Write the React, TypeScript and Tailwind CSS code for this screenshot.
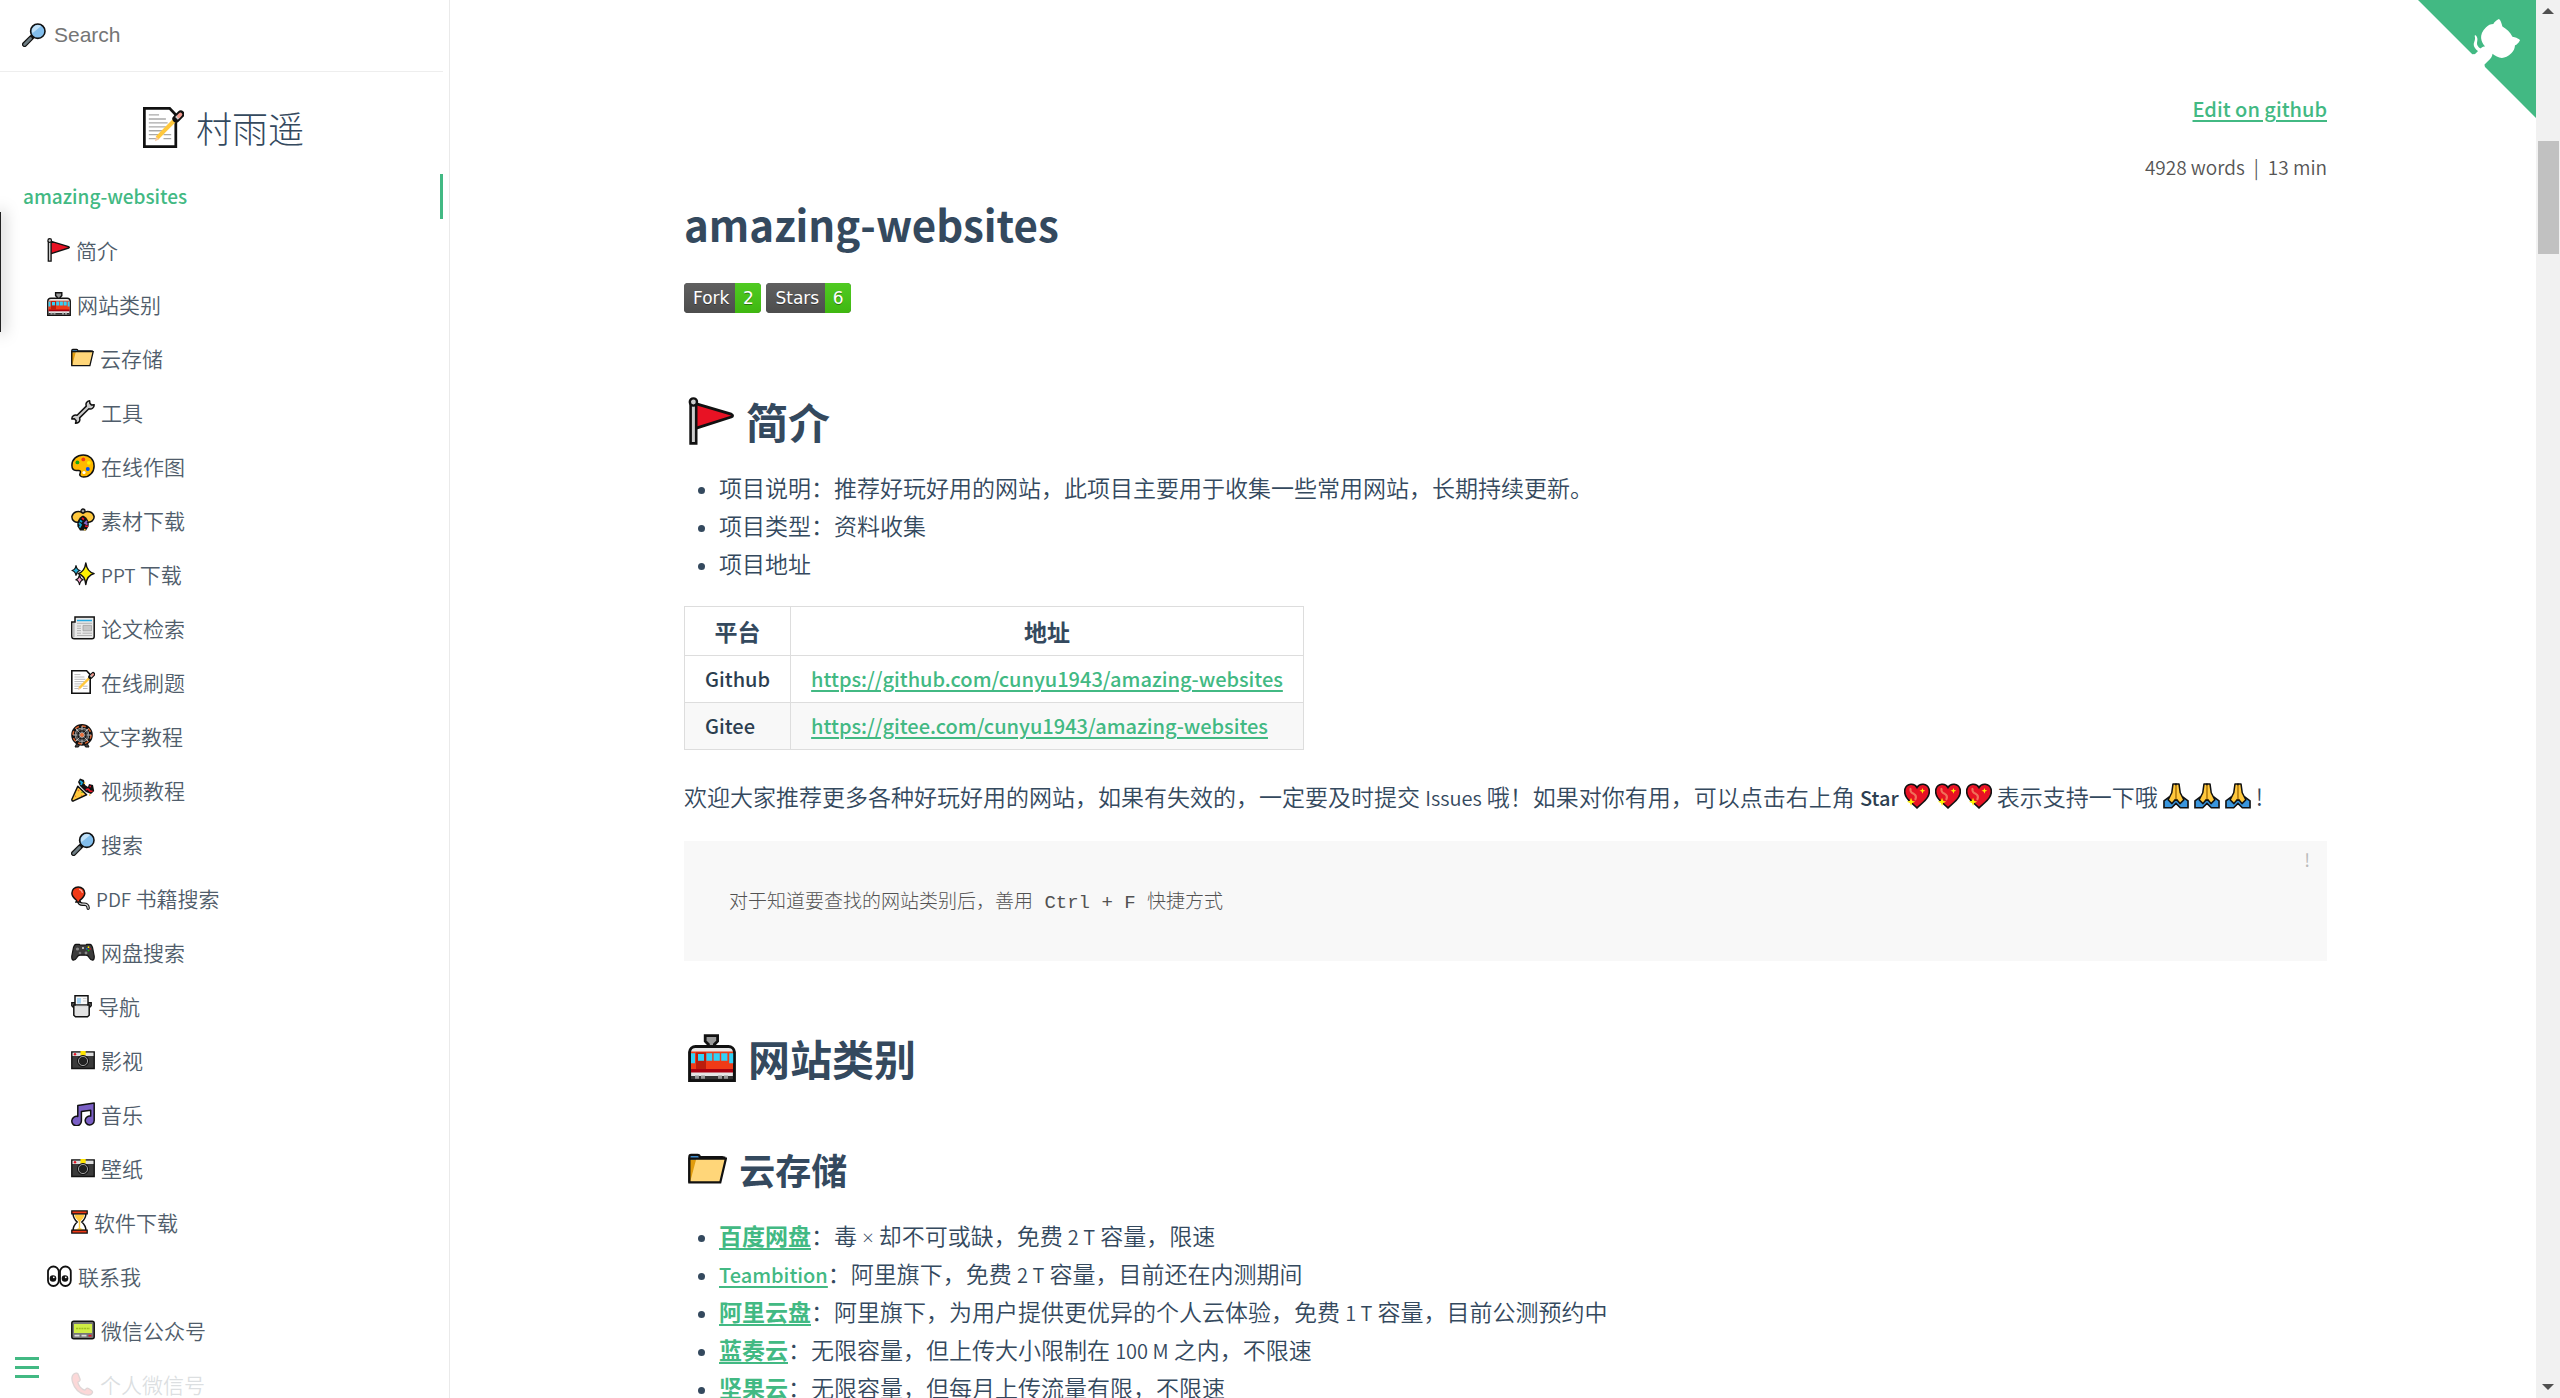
import type { ReactNode } from "react";

type IconName =
  | "search" | "memo" | "flag" | "tram" | "folder" | "wrench" | "palette" | "beetle" | "sparkles"
  | "newspaper" | "wheel" | "party" | "balloon" | "gamepad" | "printer" | "camera" | "music"
  | "hourglass" | "eyes" | "pager" | "phone" | "heart" | "pray";

/* Each drawing is 24 units high; the number is its width. */
const icons: Record<IconName, [number, ReactNode]> = {
  search: [24, <>
    <path d="M2.6 21.4 9.5 14.5" stroke="#111" strokeWidth="5.2" strokeLinecap="round" />
    <path d="M2.6 21.4 8.5 15.5" stroke="#6d7c82" strokeWidth="2.8" strokeLinecap="round" />
    <circle cx="15.8" cy="8.2" r="7.2" fill="#83beec" stroke="#111" strokeWidth="1.6" />
    <path d="M10.4 10.2a6 6 0 0 1 8.8-7.2z" fill="#c3e2f8" />
  </>],
  memo: [24, <>
    <path d="M.8.8h14.8l3.6 3.8v18.6H.8z" fill="#fff" stroke="#111" strokeWidth="1.6" />
    <path d="M3.4 4.6h6M3.4 7h10M3.4 9.3h11M3.4 11.6h10M3.4 13.9h8M3.4 16.2h6M3.4 18.5h5M12 16.2h4.5M12 18.5h4.5" stroke="#a9a9a9" strokeWidth=".8" />
    <path d="m8.3 18.1 13.1-13.3" stroke="#ffc83d" strokeWidth="2.4" />
    <path d="m7 20 .7-2.7 1.7 1.7z" fill="#f5c9a0" />
    <path d="m19.4 6.9 2.7-2.7" stroke="#111" strokeWidth="4.4" strokeLinecap="round" />
    <path d="m19.6 6.7 1.2-1.2" stroke="#ccc" strokeWidth="2.2" />
    <path d="m21 5.3.9-.9" stroke="#f09b90" strokeWidth="2.2" strokeLinecap="round" />
  </>],
  flag: [23, <>
    <path d="M3.4 3.2 21.6 8.6q1.4.8 0 1.4L3.4 15.8z" fill="#e81224" stroke="#111" strokeWidth="1.4" strokeLinejoin="round" />
    <path d="M1.3 3v20.2h2.8V3" fill="#ccc" stroke="#111" strokeWidth="1.3" />
    <circle cx="2.7" cy="2.5" r="1.8" fill="#ccc" stroke="#111" strokeWidth="1.2" />
  </>],
  tram: [24, <>
    <path d="M8.6.8h6.2v2.8l-1.6 1.6v1.4h-3V5.2L8.6 3.6z" fill="#999" stroke="#111" strokeWidth="1.4" />
    <path d="M.8 23.2V9a3 3 0 0 1 3-2.8h16.4a3 3 0 0 1 3 2.8v14.2z" fill="#e6e6e6" stroke="#111" strokeWidth="1.5" />
    <path d="M1.5 8.7h21v9.8h-21z" fill="#f03a17" />
    <path d="M1.5 17.5h21v1.8h-21z" fill="#a80010" />
    <path d="M1.5 9.6h2v5h-2zM9.2 9.6h2.9v3.8H9.2zM12.8 9.6h3.1v3.8h-3.1zM16.6 9.6h3.1v3.8h-3.1zM20.6 9.6h2v5h-2z" fill="#31d2f7" />
    <path d="M4 9.2h5v8.3H4z" fill="#bb1d0c" />
    <path d="M5 10h3v3.4H5z" fill="#31d2f7" />
    <path d="M1.5 21h21v1.6h-21z" fill="#333" />
    <path d="M3.5 21.6h5M15 21.6h5" stroke="#999" strokeWidth="1.6" strokeDasharray="2 1" />
  </>],
  folder: [23, <>
    <path d="M.8 19.6V4.6q0-1.1 1-1.1h3.8q1.2 0 1.3 1.3h13l2 .4" fill="#3f8ccc" stroke="#111" strokeWidth="1.3" />
    <path d="M.9 6.2h5.2l-3 13H.9z" fill="#e19c0d" />
    <path d="M4.8 5.9h17.3l-3.2 13.7H1.2z" fill="#ffd679" />
    <path d="M.8 5.6h21.4l-3.3 14H.8z" fill="none" stroke="#111" strokeWidth="1.3" />
  </>],
  wrench: [24, <>
    <path d="M18.6.8c-3 .3-4.2 2.700-3.300 5.300L6.100 15.300C3.400 14.500.9 15.900.8 19l2.600-.2 1.800 1.900-.7 2.500c3.300.2 5-2.300 4.100-5.300l9.300-9.200c2.800.9 5.300-.8 5.300-3.900l-2.600.300-1.700-1.700z" fill="#ccc" stroke="#111" strokeWidth="1.5" strokeLinejoin="round" />
  </>],
  palette: [24, <>
    <path d="M12.300.9C5.800.9.900 5.500.900 11.200c0 3.300 1.600 5.200 4.200 5.200h2.400c1.800 0 2.400 1 1.700 2.400-1.200 2.500.4 4.300 3.400 4.300 6 0 10.500-5 10.500-11.200S18.500.9 12.300.9z" fill="#ffb900" stroke="#111" strokeWidth="1.500" />
    <circle cx="12.300" cy="5.400" r="1.900" fill="#f03a17" /><circle cx="6.400" cy="8.400" r="1.900" fill="#16a516" />
    <circle cx="17.800" cy="8.800" r="1.900" fill="#fff100" /><circle cx="16.800" cy="14.900" r="2" fill="#0050ef" />
    <circle cx="13" cy="18.500" r="1.600" fill="#fff" />
  </>],
  beetle: [24, <>
    <path d="M12 5C8 2 2 3.500.900 8.500c-.3 4 3.600 6.500 6.600 5.500L12 9l4.500 5c3.500.8 6.900-2 6.600-5.500C22 3.500 16 2 12 5z" fill="#ffc83d" stroke="#111" strokeWidth="1.500" />
    <circle cx="12" cy="3" r="2" fill="#999" stroke="#111" strokeWidth="1.300" />
    <path d="M12 7.500c-4 2-6.500 6-5.500 11L9 22.500h6l2.500-4c1.200-5-1.500-9-5.500-11z" fill="#111" />
    <path d="m8 15 2 2-1.500 2.500M9 12.500l2 1.500" stroke="#0fa3d1" strokeWidth="1.800" />
    <path d="m16 13-2 2 2.500 1.500" stroke="#8764c8" strokeWidth="1.800" />
    <path d="m14 18 3 .5M11 10l2 1.500" stroke="#e81224" strokeWidth="1.700" />
    <path d="m13 21.500 1.500.5" stroke="#ffc83d" strokeWidth="1.600" />
  </>],
  sparkles: [24, <>
    <path d="M14.800 1q1.200 8.700 8.300 10.600-7 1.800-8.300 10.800-1-9-7.800-10.800Q13.700 9.700 14.800 1z" fill="#fff100" stroke="#111" strokeWidth="1.500" strokeLinejoin="round" />
    <path d="M5 3.500q.8 4.200 4 5-3.200.9-4 5-.7-4.100-4-5 3.400-.8 4-5z" fill="#26b3dd" stroke="#111" strokeWidth="1.200" strokeLinejoin="round" />
    <path d="M8.500 13.200q.8 3.800 3.700 4.600-2.900.9-3.700 4.900-.7-4-3.700-4.900 3-.8 3.700-4.600z" fill="#f7a4cd" stroke="#111" strokeWidth="1.200" strokeLinejoin="round" />
  </>],
  newspaper: [24, <>
    <path d="M4 6H.8v14.500q0 2.300 2.500 2.300H21q2.200 0 2.200-2.300V1H4z" fill="#e9e9e9" stroke="#111" strokeWidth="1.500" />
    <path d="M3.700 7v13q0 1.500-1 1.500-1.200 0-1.200-1.500V7z" fill="#bbb" />
    <path d="M6 4.500h15" stroke="#26a9e0" strokeWidth="1.500" />
    <path d="M6 7.300h15M6 10h4M6 12.300h4M6 14.600h4M6 17.200h4M11.500 17.200H21M6 19.500h15" stroke="#aaa" strokeWidth=".9" />
    <path d="M12 9.400h8.500v5.400H12z" fill="#c6c6c6" stroke="#999" strokeWidth=".7" />
  </>],
  wheel: [22, <>
    <path d="m8 15-4 8h3.500L11 15l3.500 8H18l-4-8" fill="#444" stroke="#111" strokeWidth="1" />
    <circle cx="11" cy="10.900" r="9" fill="#fff" stroke="#111" strokeWidth="3.600" />
    <circle cx="11" cy="10.900" r="9" fill="none" stroke="#d8612c" strokeWidth="1.500" strokeDasharray="4 3" />
    <circle cx="11" cy="10.900" r="7" fill="#555" />
    <path d="M11 2v18M2 11h18M4.600 4.600l12.800 12.800M17.400 4.600 4.600 17.400" stroke="#ddd" strokeWidth=".8" />
    <circle cx="11" cy="10.900" r="4" fill="none" stroke="#111" strokeWidth="1.300" />
    <circle cx="11" cy="10.900" r="1.900" fill="#f07038" />
  </>],
  party: [24, <>
    <path d="M9 8 7 4l2-3.500 4 1.500 1 5 3 2 1-3 4 1 1.200 6-3.200 3-5-2z" fill="#111" />
    <path d="m9 3 2 1.500-1 2.500" stroke="#18a5d6" strokeWidth="1.900" fill="none" />
    <path d="M15 12q2-2 3 0t3.500 1M18.500 8.500h1.500" stroke="#e81224" strokeWidth="1.700" fill="none" />
    <path d="m6.800 8.200 8.800 8.600L2.500 22.900Q.6 23.200.900 21.300z" fill="#ffc83d" stroke="#111" strokeWidth="1.500" strokeLinejoin="round" />
    <path d="m8 12-1 1M5 18l-1 .5M11 17l-.5.8" stroke="#e8622c" strokeWidth="1.300" /><path d="m10.500 14 1 .5" stroke="#16a516" strokeWidth="1.300" />
    <path d="M18 17h1.500M13.500 4.500V6" stroke="#ffc83d" strokeWidth="1.500" />
  </>],
  balloon: [19, <>
    <path d="M7.500 14.500q.5 4 5 3.700t4.700 4" fill="none" stroke="#111" strokeWidth="3.400" strokeLinecap="round" />
    <path d="M7.500 14.500q.5 4 5 3.700t4.700 4" fill="none" stroke="#ddd" strokeWidth="1.200" strokeLinecap="round" />
    <path d="M7.200 1C3.500 1 .9 3.800.9 7.200c0 3.300 2.300 5 4.700 7.200L5 16h4.400l-.6-1.600c2.500-2 5-4 5-7.200C13.800 3.800 11 1 7.200 1z" fill="#f03a17" stroke="#111" strokeWidth="1.500" />
    <path d="M8.500 3.300q2.500.7 2.800 3" fill="none" stroke="#ffab9c" strokeWidth="1.200" strokeLinecap="round" />
  </>],
  gamepad: [24, <>
    <path d="M5 4.300h3.300q.7.900 1.700.9h4q1 0 1.700-.9H19q1.700.2 2.500 3.200l1.700 8.500q.3 4-1.600 4.200-1.700 0-3.600-2.900Q16.800 15.200 15 15.200H9q-1.800 0-3 2.100-1.900 2.900-3.600 2.900Q.5 20 .8 16l1.700-8.500Q3.300 4.500 5 4.300z" fill="#3b3b3b" stroke="#111" strokeWidth="1.200" />
    <circle cx="6.500" cy="9" r="1.600" fill="#888" /><circle cx="15" cy="13" r="1.400" fill="#888" /><circle cx="9" cy="13" r="1.300" fill="#777" />
    <circle cx="12" cy="8" r="1" fill="#ddd" /><circle cx="17.500" cy="7.200" r=".9" fill="#fff100" /><circle cx="17.500" cy="10.400" r=".9" fill="#16c60c" />
    <circle cx="15.800" cy="8.900" r=".8" fill="#0078d7" /><circle cx="19.100" cy="8.900" r=".8" fill="#e81224" />
  </>],
  printer: [21, <>
    <path d="M.8 8.800h19.400v3l-1.500 1.500H2.300L.8 11.800z" fill="#888" stroke="#111" strokeWidth="1.400" />
    <path d="M4 1.800h13v11H4z" fill="#f8f8f8" stroke="#111" strokeWidth="1.500" />
    <path d="M6 4h4v5.500H6z" fill="#a6d3f2" /><path d="M12 4.500h3.500M12 7h3.500" stroke="#ccc" />
    <path d="M2.800 11h15.400v10.200l-1.700 1.500h-12l-1.700-1.500z" fill="#e3e3e3" stroke="#111" strokeWidth="1.500" />
    <path d="M5 11.500h11" stroke="#777" strokeWidth="1.200" />
  </>],
  camera: [24, <>
    <path d="M.8 4h22.400v16.500H.8z" fill="#3a3a3a" stroke="#111" strokeWidth="1.400" />
    <path d="M1.500 4.600h21V8h-21z" fill="#ddd" /><path d="M9.500 3h5.200v4.500H9.500z" fill="#ffe500" />
    <circle cx="4" cy="6.200" r="1.200" fill="#e81224" />
    <circle cx="12" cy="13" r="5.400" fill="#1b1b1b" stroke="#111" strokeWidth="1.300" /><circle cx="12" cy="13" r="4.600" fill="#222" stroke="#aaa" strokeWidth=".9" />
  </>],
  music: [24, <>
    <path d="M6.800 3.500 23.200 1v17.500a4.500 4.500 0 1 1-3.500-4.400V8.300l-9.300 1.300V19a4.800 4.800 0 1 1-3.600-4.600z" fill="#7a5fc5" stroke="#111" strokeWidth="1.500" strokeLinejoin="round" />
  </>],
  hourglass: [17, <>
    <path d="M2 3.500q.2 5 4.200 8.500Q2.200 15.500 2 20.500h13q-.2-5-4.200-8.500 4-3.500 4.200-8.500z" fill="#fff" stroke="#111" strokeWidth="1.500" />
    <path d="M3.300 4.500h10.400q-.7 4-4.500 6.900V18l4 2H3.800l4-2v-6.600Q4 8.500 3.300 4.500z" fill="#ffc83d" />
    <path d="M.8.900h15.400v3H.8zM.8 20.100h15.400v3H.8z" fill="#f03a17" stroke="#111" strokeWidth="1.300" />
  </>],
  eyes: [25, <>
    <rect x="1" y="2.500" width="10.800" height="19.500" rx="5.400" fill="#fff" stroke="#111" strokeWidth="1.800" />
    <rect x="13" y="2.500" width="10.800" height="19.500" rx="5.400" fill="#fff" stroke="#111" strokeWidth="1.800" />
    <circle cx="6" cy="14.500" r="3.300" fill="#111" /><circle cx="18" cy="14.500" r="3.300" fill="#111" />
    <circle cx="6.800" cy="13.300" r=".9" fill="#fff" /><circle cx="18.800" cy="13.300" r=".9" fill="#fff" />
  </>],
  pager: [24, <>
    <rect x=".8" y="3.300" width="22.400" height="17.400" rx="2" fill="#767676" stroke="#111" strokeWidth="1.500" />
    <path d="M3 6h18v9H3z" fill="#d0ee45" /><path d="M5 10.500h14" stroke="#9fbf20" strokeWidth="1.500" strokeDasharray="2 .7" />
    <path d="M3.500 17.700h5M10.500 17.700h5" stroke="#ddd" strokeWidth="1.700" /><path d="M17.500 17.700h3" stroke="#e81224" strokeWidth="1.700" />
  </>],
  phone: [23, <>
    <path d="M3.500 1.500C.9 3 .5 6.500 1.500 10c1.800 6 6.500 11 12.500 12.700 3.500.9 6.500.3 7.500-2.200.3-1-.3-1.500-1-2l-3-2c-1-.6-1.800-.3-2.500.4l-1.200 1.300c-3.300-1-6.600-4.700-7-8l1.500-1c.8-.6 1-1.300.7-2.300L7.500 3c-.5-1.800-2.500-2.400-4-1.500z" fill="#f03a3a" stroke="#5a3030" strokeWidth="1.300" />
  </>],
  heart: [24, <>
    <path d="M12 4.200C9.500-.3 2.700.3 1 5.300c-1.400 4.500 1.300 9 5.500 12.700L12 23l5.500-5c4.200-3.700 6.900-8.200 5.500-12.700C21.300.3 14.500-.3 12 4.200z" fill="#e81224" stroke="#111" strokeWidth="1.500" />
    <path d="M6 5.500q-.5 3 3 4.500 3 1.700 1.500 5" fill="none" stroke="#f0705a" strokeWidth="2" strokeLinecap="round" />
    <path d="m6.500 13.500 1 2.900 2.900 1-2.900 1-1 2.900-1-2.900-2.900-1 2.900-1zM17 4.500l.7 2 2 .7-2 .7-.7 2-.7-2-2-.7 2-.7z" fill="#fff100" />
  </>],
  pray: [24, <>
    <path d="M.9 16.500 5.500 13l6.500 3 6.500-3 4.600 3.500v6.300h-7.100l-4-4-4 4H.9z" fill="#3a96dd" stroke="#111" strokeWidth="1.500" />
    <path d="M9.200 1H12v13.500L8.300 19l-3.600-3.500L8.100 9z" fill="#ffc83d" stroke="#111" strokeWidth="1.400" strokeLinejoin="round" />
    <path d="M14.800 1H12v13.500l3.700 4.500 3.600-3.500L15.900 9z" fill="#ffc83d" stroke="#111" strokeWidth="1.400" strokeLinejoin="round" />
    <path d="M12 2v13" stroke="#d99a16" strokeWidth="1.600" />
  </>],
};

function Icon({ name, className = "h-6" }: { name: IconName; className?: string }) {
  const [width, drawing] = icons[name];
  return (
    <svg viewBox={`0 0 ${width} 24`} fill="none" aria-hidden="true" className={`w-auto shrink-0 ${className}`}>
      {drawing}
    </svg>
  );
}

type NavItem = { icon: IconName; label: string; latin?: string; children?: NavItem[] };

const nav: NavItem[] = [
  { icon: "flag", label: "简介" },
  {
    icon: "tram", label: "网站类别", children: [
      { icon: "folder", label: "云存储" },
      { icon: "wrench", label: "工具" },
      { icon: "palette", label: "在线作图" },
      { icon: "beetle", label: "素材下载" },
      { icon: "sparkles", latin: "PPT", label: "下载" },
      { icon: "newspaper", label: "论文检索" },
      { icon: "memo", label: "在线刷题" },
      { icon: "wheel", label: "文字教程" },
      { icon: "party", label: "视频教程" },
      { icon: "search", label: "搜索" },
      { icon: "balloon", latin: "PDF", label: "书籍搜索" },
      { icon: "gamepad", label: "网盘搜索" },
      { icon: "printer", label: "导航" },
      { icon: "camera", label: "影视" },
      { icon: "music", label: "音乐" },
      { icon: "camera", label: "壁纸" },
      { icon: "hourglass", label: "软件下载" },
    ],
  },
  {
    icon: "eyes", label: "联系我", children: [
      { icon: "pager", label: "微信公众号" },
      { icon: "phone", label: "个人微信号" },
    ],
  },
];

function NavList({ items }: { items: NavItem[] }) {
  return (
    <ul className="pl-6">
      {items.map((item) => (
        <li key={item.label + item.icon}>
          <a href="#" className="flex h-[54px] items-center gap-[6px] text-[21px] leading-6 font-[350] text-[#505d6b]">
            <Icon name={item.icon} />
            <span className="whitespace-nowrap">
              {item.latin && <span className="text-[19px] leading-none">{item.latin} </span>}
              {item.label}
            </span>
          </a>
          {item.children && <NavList items={item.children} />}
        </li>
      ))}
    </ul>
  );
}

function Sidebar() {
  return (
    <aside className="relative flex w-[450px] shrink-0 flex-col overflow-hidden border-r border-[#eaeaea] bg-white pr-[6px]">
      <label className="flex h-[72px] shrink-0 items-center gap-[8px] border-b border-[#eee] pb-[2px] pl-[22px]">
        <Icon name="search" />
        <input
          type="search"
          aria-label="Search"
          placeholder="Search"
          className="w-full bg-transparent font-['Liberation_Sans',sans-serif] text-[21px] outline-none placeholder:text-[#757575]"
        />
      </label>
      <h1 className="mt-[27px] flex h-14 shrink-0 items-center justify-center gap-[12px] pl-1 text-[36px] font-light">
        <Icon name="memo" className="h-[41px]" />
        <a href="#">村雨遥</a>
      </h1>
      <nav className="mt-[15px] pl-[23px]">
        <a href="#" className="flex h-[53px] items-center">
          <span className="flex h-[45px] w-full items-center border-r-[3px] border-[#42b983] text-[19px] font-medium text-[#42b983]">
            amazing-websites
          </span>
        </a>
        <NavList items={nav} />
      </nav>
      <button aria-label="Menu" className="absolute bottom-0 left-0 flex h-14 w-[426px] flex-col gap-[6px] bg-white/80 pt-[15px] pl-[15px]">
        <span className="h-[3px] w-6 bg-[#42b983]" />
        <span className="h-[3px] w-6 bg-[#42b983]" />
        <span className="h-[3px] w-6 bg-[#42b983]" />
      </button>
      <div className="absolute top-[212px] left-0 h-[120px] w-px bg-[#222] shadow-[0_0_15px_2px_rgba(0,0,0,0.35)]" />
    </aside>
  );
}

function Link({ children }: { children: ReactNode }) {
  return (
    <a href="#" className="font-medium text-[#42b983] underline decoration-2 underline-offset-[3px]">
      {children}
    </a>
  );
}

function Latin({ children }: { children: ReactNode }) {
  return <span className="text-[20px] leading-none">{children}</span>;
}

function Badge({ label, count }: { label: string; count: number }) {
  return (
    <a
      href="#"
      className="flex h-[30px] overflow-hidden rounded-[4px] bg-[#555] font-['DejaVu_Sans',sans-serif] text-[17px] leading-[30px] font-normal text-white [text-shadow:0_1px_0_rgba(0,0,0,0.4)]"
    >
      <span className="bg-linear-to-b from-[#606060] to-[#4d4d4d] pr-[6px] pl-[9px]">{label}</span>
      <span className="w-[26px] bg-linear-to-b from-[#50cb22] to-[#3fb710] text-center">{count}</span>
    </a>
  );
}

const storage: { name: ReactNode; text: ReactNode }[] = [
  {
    name: <strong>百度网盘</strong>,
    text: <>毒 <span className="font-['Open_Sans',sans-serif] text-[20px] leading-none">×</span> 却不可或缺，免费 <Latin>2 T</Latin> 容量，限速</>,
  },
  { name: <Latin>Teambition</Latin>, text: <>阿里旗下，免费 <Latin>2 T</Latin> 容量，目前还在内测期间</> },
  { name: <strong>阿里云盘</strong>, text: <>阿里旗下，为用户提供更优异的个人云体验，免费 <Latin>1 T</Latin> 容量，目前公测预约中</> },
  { name: <strong>蓝奏云</strong>, text: <>无限容量，但上传大小限制在 <Latin>100 M</Latin> 之内，不限速</> },
  { name: <strong>坚果云</strong>, text: <>无限容量，但每月上传流量有限，不限速</> },
];

function Article() {
  return (
    <article className="mx-auto w-4/5 pt-[90px] pr-[22px] pl-[23px] text-[23px] leading-[38px] font-[350]">
      <p className="text-right text-[20px]"><Link>Edit on github</Link></p>
      <p className="mt-5 flex justify-end gap-[9px] text-[19px] text-[#555]">
        <span>4928 words</span>
        <span>|</span>
        <span>13 min</span>
      </p>
      <h1 className="mt-2 text-[42px] leading-[60px] font-bold">amazing-websites</h1>
      <p className="mt-[29px] flex gap-[5px]">
        <Badge label="Fork" count={2} />
        <Badge label="Stars" count={6} />
      </p>

      <h2 className="mt-[78px] flex items-center gap-[12px] pl-1 text-[42px] leading-[60px] font-bold">
        <Icon name="flag" className="h-12" />简介
      </h2>
      <ul className="mt-[17px] list-disc pl-[35px] marker:text-[19px]">
        <li>项目说明：推荐好玩好用的网站，此项目主要用于收集一些常用网站，长期持续更新。</li>
        <li>项目类型：资料收集</li>
        <li>项目地址</li>
      </ul>
      <table className="mt-[24px] border-collapse [&_td]:border [&_td]:border-[#ddd] [&_td]:px-5 [&_th]:border [&_th]:border-[#ddd] [&_th]:px-5">
        <thead>
          <tr className="h-[49px]"><th>平台</th><th>地址</th></tr>
        </thead>
        <tbody className="text-[20px]">
          <tr className="h-[47px]">
            <td className="font-medium text-[#2c3e50]">Github</td>
            <td><Link>https://github.com/cunyu1943/amazing-websites</Link></td>
          </tr>
          <tr className="h-[47px] bg-[#f8f8f8]">
            <td className="font-medium text-[#2c3e50]">Gitee</td>
            <td><Link>https://gitee.com/cunyu1943/amazing-websites</Link></td>
          </tr>
        </tbody>
      </table>
      <p className="mt-[27px] flex items-center gap-[5px] whitespace-nowrap">
        <span>
          欢迎大家推荐更多各种好玩好用的网站，如果有失效的，一定要及时提交 <Latin>Issues</Latin> 哦！如果对你有用，可以点击右上角{" "}
          <strong className="text-[20px] leading-none font-medium text-[#2c3e50]">Star</strong>
        </span>
        <Icon name="heart" className="h-[26px]" />
        <Icon name="heart" className="h-[26px]" />
        <Icon name="heart" className="h-[26px]" />
        <span>表示支持一下哦</span>
        <Icon name="pray" className="h-[26px]" />
        <Icon name="pray" className="h-[26px]" />
        <Icon name="pray" className="h-[26px]" />
        <span>!</span>
      </p>
      <div className="relative mt-[26px] bg-[#f8f8f8] px-[45px] pt-[43px] pb-[39px]">
        <pre className="font-['Liberation_Mono','Noto_Sans_CJK_SC',monospace] text-[19px] leading-[38px] font-light text-[#525252]">
          对于知道要查找的网站类别后，善用 Ctrl + F 快捷方式
        </pre>
        <span className="absolute top-0 right-[17px] text-[18px] leading-9 font-normal text-[#bbb]">!</span>
      </div>

      <h2 className="mt-[67px] flex items-center gap-[12px] pl-1 text-[42px] leading-[60px] font-bold">
        <Icon name="tram" className="h-12" />网站类别
      </h2>
      <h3 className="mt-[56px] flex items-center gap-[12px] pl-1 text-[36px] leading-[50px] font-bold">
        <Icon name="folder" className="h-[41px]" />云存储
      </h3>
      <ul className="mt-[22px] list-disc pl-[35px] marker:text-[19px]">
        {storage.map((site, i) => (
          <li key={i}><Link>{site.name}</Link>：{site.text}</li>
        ))}
      </ul>
    </article>
  );
}

function GithubCorner() {
  return (
    <a href="#" aria-label="View source on Github" className="fixed top-0 right-6">
      <svg viewBox="0 0 250 250" aria-hidden="true" className="size-[118px] fill-[#42b983] text-white">
        <path d="M0,0 L115,115 L130,115 L142,142 L250,250 L250,0 Z" />
        <path fill="currentColor" d="M128.3,109.0 C113.8,99.7 119.0,89.6 119.0,89.6 C122.0,82.7 120.5,78.6 120.5,78.6 C119.2,72.0 123.4,76.3 123.4,76.3 C127.3,80.9 125.5,87.3 125.5,87.3 C122.9,97.6 130.6,101.9 134.4,103.2" />
        <path fill="currentColor" d="M115.0,115.0 C114.9,115.1 118.7,116.5 119.8,115.4 L133.7,101.6 C136.9,99.2 139.9,98.4 142.2,98.6 C133.8,88.0 127.5,74.4 143.8,58.0 C148.5,53.4 154.0,51.2 159.7,51.0 C160.3,49.4 163.2,43.6 171.4,40.1 C171.4,40.1 176.1,42.5 178.8,56.2 C183.1,58.6 187.2,61.8 190.9,65.4 C194.5,69.0 197.7,73.2 200.1,77.6 C213.8,80.2 216.3,84.9 216.3,84.9 C212.7,93.1 206.9,96.0 205.4,96.6 C205.1,102.4 203.0,107.8 198.3,112.5 C181.9,128.9 168.3,122.5 157.7,114.1 C157.9,116.9 156.7,120.9 152.7,124.9 L141.0,136.5 C139.8,137.7 141.6,141.9 141.8,141.8 Z" />
      </svg>
    </a>
  );
}

function PageScrollbar() {
  return (
    <div aria-hidden="true" className="fixed inset-y-0 right-0 flex w-6 flex-col items-center justify-between bg-[#f1f1f1] py-2">
      <svg viewBox="0 0 12 6" className="h-[6px] w-3 fill-[#505050]"><path d="M6 0 12 6H0z" /></svg>
      <svg viewBox="0 0 12 6" className="h-[6px] w-3 fill-[#505050]"><path d="M0 0h12L6 6z" /></svg>
      <div className="absolute top-[141px] right-px h-[113px] w-[21px] bg-[#c1c1c1]" />
    </div>
  );
}

export default function App() {
  return (
    <div className="flex h-screen overflow-hidden bg-white font-['Noto_Sans_CJK_SC',sans-serif] text-[#34495e]">
      <Sidebar />
      <main className="min-w-0 flex-1 overflow-hidden"><Article /></main>
      <GithubCorner />
      <PageScrollbar />
    </div>
  );
}
